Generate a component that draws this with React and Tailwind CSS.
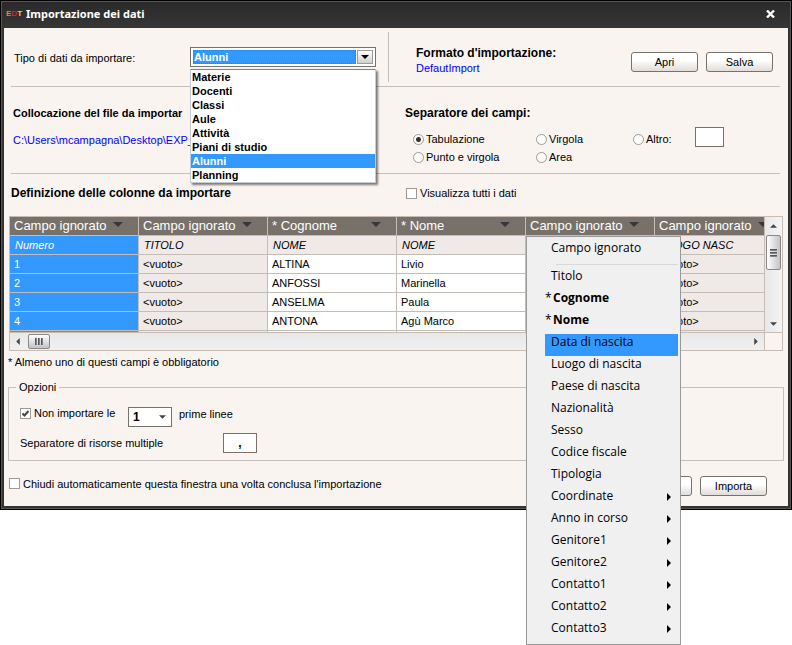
const types = ["Materie", "Docenti", "Classi", "Aule", "Attività", "Piani di studio", "Alunni", "Planning"];

const columns = [
  { title: "Campo ignorato", field: "Numero", values: ["1", "2", "3", "4"], kind: "selected" },
  { title: "Campo ignorato", field: "TITOLO", values: ["<vuoto>", "<vuoto>", "<vuoto>", "<vuoto>"], kind: "ignored" },
  { title: "* Cognome", field: "NOME", values: ["ALTINA", "ANFOSSI", "ANSELMA", "ANTONA"], kind: "used" },
  { title: "* Nome", field: "NOME", values: ["Livio", "Marinella", "Paula", "Agù Marco"], kind: "used" },
  { title: "Campo ignorato", field: "", values: ["", "", "", ""], kind: "ignored" },
  { title: "Campo ignorato", field: "LUOGO NASC", values: ["<vuoto>", "<vuoto>", "<vuoto>", "<vuoto>"], kind: "ignored" },
];

const cellColors = {
  selected: "bg-[#3399ff] text-white",
  ignored: "bg-[#efeae7]",
  used: "bg-white",
};

const menuItems = [
  { label: "Titolo" },
  { label: "Cognome", required: true },
  { label: "Nome", required: true },
  { label: "Data di nascita", active: true },
  { label: "Luogo di nascita" },
  { label: "Paese di nascita" },
  { label: "Nazionalità" },
  { label: "Sesso" },
  { label: "Codice fiscale" },
  { label: "Tipologia" },
  { label: "Coordinate", sub: true },
  { label: "Anno in corso", sub: true },
  { label: "Genitore1", sub: true },
  { label: "Genitore2", sub: true },
  { label: "Contatto1", sub: true },
  { label: "Contatto2", sub: true },
  { label: "Contatto3", sub: true },
];

function Arrow({ dir, className }) {
  const d = {
    down: "M0 0H8L4 4Z",
    up: "M0 4H8L4 0Z",
    left: "M4 0V8L0 4Z",
    right: "M0 0V8L4 4Z",
  }[dir];
  const wide = dir === "down" || dir === "up";
  return (
    <svg aria-hidden="true" className={className} viewBox={wide ? "0 0 8 4" : "0 0 4 8"} fill="currentColor">
      <path d={d} />
    </svg>
  );
}

function PushButton({ children, ...rest }) {
  return (
    <button
      type="button"
      className="h-5 w-[67px] rounded-[3px] border border-[#77716a] bg-linear-to-b from-white from-40% to-[#e0dcd9] text-center leading-[18px]"
      {...rest}
    >
      {children}
    </button>
  );
}

function Radio({ label, checked }) {
  return (
    <label className="flex h-[18px] items-center gap-0.5">
      <input
        type="radio"
        name="separator"
        defaultChecked={checked}
        className="size-[11px] shrink-0 appearance-none rounded-full border border-[#a09a96] bg-white checked:bg-[radial-gradient(circle,#333_0_2px,#fff_3px)]"
      />
      {label}
    </label>
  );
}

function Check({ label, checked }) {
  return (
    <label className="flex items-center gap-[3px]">
      <span className="relative flex size-[11px] shrink-0">
        <input
          type="checkbox"
          defaultChecked={checked}
          className="size-[11px] appearance-none border border-[#a09a96] bg-white"
        />
        {checked && (
          <svg aria-hidden="true" viewBox="0 0 11 11" className="pointer-events-none absolute inset-0" fill="none" stroke="#444" strokeWidth="2">
            <path d="M2.5 5.5L4.5 7.5L8.5 3" />
          </svg>
        )}
      </span>
      {label}
    </label>
  );
}

function TitleBar() {
  return (
    <header className="flex h-[26px] items-center bg-linear-to-b from-[#2a2a2a] to-[#363636] pr-[15px] pb-0.5 pl-1">
      <span aria-hidden="true" className="w-4 text-[8px] leading-[10px] font-bold">
        <span className="text-[#f08020]">E</span>
        <span className="text-[#d42418]">D</span>
        <span className="text-[#f6d21c]">T</span>
      </span>
      <h1 className="flex-1 pl-1 font-['Noto_Sans','Open_Sans',sans-serif] text-[11px] font-bold text-white">
        Importazione dei dati
      </h1>
      <button type="button" aria-label="Chiudi" className="text-white">
        <svg aria-hidden="true" viewBox="0 0 9 8" className="h-2 w-[9px]" stroke="currentColor" strokeWidth="2.400">
          <path d="M1 0.500L8 7.500M8 0.500L1 7.500" />
        </svg>
      </button>
    </header>
  );
}

function TypePicker() {
  return (
    <div className="relative w-[186px]">
      <div className="flex h-5 border border-[#77716a] bg-white p-0.5">
        <select
          id="type"
          defaultValue="Alunni"
          className="h-[14px] min-w-0 flex-1 appearance-none border border-dotted border-[#c06000] bg-[#3399ff] text-[11px] leading-3 font-bold text-white"
        >
          {types.map((t) => (
            <option key={t}>{t}</option>
          ))}
        </select>
        <span className="ml-px flex w-4 items-center justify-center border border-[#a09a96] bg-linear-to-b from-white to-[#d0d0d0]">
          <Arrow dir="down" className="h-1 w-2" />
        </span>
      </div>
      <ul className="absolute top-[22px] left-0 z-10 w-full border border-[#c4ccd8] border-t-[#808080] bg-white font-bold shadow-[2px_2px_2px_rgba(0,0,0,0.5)]">
        {types.map((t) => (
          <li key={t} className={t === "Alunni" ? "h-[14px] bg-[#3399ff] pl-px leading-[14px] text-white" : "h-[14px] pl-px leading-[14px]"}>
            {t}
          </li>
        ))}
      </ul>
    </div>
  );
}

function FieldMenu() {
  return (
    <div
      role="menu"
      className="absolute top-5 left-[517px] z-10 w-[155px] border border-[#999] bg-[#f0f0f0] pr-0.5 pb-0.5 pl-[18px] font-['Open_Sans','Noto_Sans',sans-serif] text-[12px]"
    >
      <button type="button" role="menuitem" className="block h-[22px] w-full pl-1.5 text-left leading-5">
        Campo ignorato
      </button>
      <hr className="mt-[5px] mb-[3px] ml-[11px] border-[#d8d8d8]" />
      {menuItems.map(({ label, required, active, sub }) => (
        <button
          key={label}
          type="button"
          role="menuitem"
          className={active ? "flex h-[22px] w-full items-start bg-[#3399ff] leading-4" : "flex h-[22px] w-full items-start leading-4"}
        >
          <span className={required ? "w-2 shrink-0 text-left" : "w-1.5 shrink-0"}>{required ? "*" : ""}</span>
          <span className={required ? "flex-1 text-left font-bold" : "flex-1 text-left"}>{label}</span>
          {sub && <Arrow dir="right" className="mt-[5px] mr-[7px] h-2 w-1" />}
        </button>
      ))}
    </div>
  );
}

function DataGrid() {
  return (
    <div className="relative mr-[5px] ml-[5px]">
      <div className="flex border border-[#c4bcb5]">
        <div className="h-[115px] min-w-0 flex-1 overflow-hidden">
          <table className="w-[774px] table-fixed border-separate border-spacing-0 text-left">
            <thead>
              <tr>
                {columns.map((c, i) => (
                  <th key={i} className="h-[19px] border-r border-b border-[#c4bcb5] bg-[#77716a] p-0 text-[13px] leading-[18px] font-normal text-white">
                    <span className="flex h-[18px] items-center justify-between pr-[15px] pl-1">
                      {c.title}
                      <Arrow dir="down" className="mb-1 h-[5px] w-2.5 text-[#33383c]" />
                    </span>
                  </th>
                ))}
              </tr>
            </thead>
            <tbody>
              <tr>
                {columns.map((c, i) => (
                  <td
                    key={i}
                    className={`h-[19px] border-r border-b border-[#c4bcb5] p-0 pl-[5px] leading-[18px] italic ${c.kind === "selected" ? cellColors.selected : cellColors.ignored}`}
                  >
                    {c.field}
                  </td>
                ))}
              </tr>
              {[0, 1, 2, 3, 4].map((r) => (
                <tr key={r}>
                  {columns.map((c, i) => (
                    <td key={i} className={`h-[19px] border-r border-b border-[#c4bcb5] p-0 pl-1 leading-[18px] ${cellColors[c.kind]}`}>
                      {c.values[r]}
                    </td>
                  ))}
                </tr>
              ))}
            </tbody>
          </table>
        </div>
        <div className="flex w-[18px] flex-col items-center justify-between border-l border-[#c4bcb5] bg-linear-to-r from-[#e8e8e8] to-[#f4f4f4] pb-1.5">
          <div className="flex flex-col items-center">
            <span className="flex h-[18px] items-center text-[#444]">
              <Arrow dir="up" className="h-1 w-[7px]" />
            </span>
            <span className="flex h-[35px] w-[15px] flex-col items-center justify-center gap-px rounded-[2px] border border-[#888] bg-linear-to-r from-white to-[#c4c4c8]">
              <i className="h-0.5 w-[7px] bg-linear-to-b from-[#444] to-[#999]" />
              <i className="h-0.5 w-[7px] bg-linear-to-b from-[#444] to-[#999]" />
              <i className="h-0.5 w-[7px] bg-linear-to-b from-[#444] to-[#999]" />
            </span>
          </div>
          <Arrow dir="down" className="h-1 w-[7px] text-[#444]" />
        </div>
      </div>
      <div className="flex h-[18px] border-x border-b border-[#c4bcb5]">
        <div className="flex flex-1 items-center bg-linear-to-b from-[#e8e8e8] to-[#f0f0f0] px-1.5 text-[#444]">
          <Arrow dir="left" className="h-[7px] w-1" />
          <span className="ml-2 flex h-[15px] w-[22px] items-center justify-center gap-px rounded-[2px] border border-[#888] bg-linear-to-b from-white to-[#c4c4c8]">
            <i className="h-[7px] w-0.5 bg-linear-to-r from-[#444] to-[#999]" />
            <i className="h-[7px] w-0.5 bg-linear-to-r from-[#444] to-[#999]" />
            <i className="h-[7px] w-0.5 bg-linear-to-r from-[#444] to-[#999]" />
          </span>
          <Arrow dir="right" className="ml-auto h-[7px] w-1" />
        </div>
        <div className="w-[18px] border-l border-[#c4bcb5]" />
      </div>
      <FieldMenu />
    </div>
  );
}

export default function App() {
  return (
    <div className="bg-white pb-[135px] font-['Liberation_Sans',Arial,sans-serif] text-[11px] leading-[14px] text-black">
      <div className="border border-black bg-[#363330]">
        <div className="border border-[#555]">
          <TitleBar />
          <main className="mx-0.5 mb-0.5 bg-[#f9f4f0]">
            <section className="mr-2 ml-[7px] flex h-[59px] border-b border-[#c4c0bc] pt-1">
              <label htmlFor="type" className="w-[179px] pt-[19px] pl-[3px]">
                Tipo di dati da importare:
              </label>
              <div className="pt-[15px]">
                <TypePicker />
              </div>
              <div className="ml-3 flex h-[50px] flex-1 border-l border-[#c4c0bc] pl-[27px]">
                <div className="flex-1 pt-3.5">
                  <h2 className="text-[12px] leading-[15px] font-bold">Formato d'importazione:</h2>
                  <a href="#format" className="block text-[#0000ff]">DefautImport</a>
                </div>
                <div className="flex gap-2 pt-5 pr-[7px]">
                  <PushButton>Apri</PushButton>
                  <PushButton>Salva</PushButton>
                </div>
              </div>
            </section>
            <section className="mr-2 ml-[7px] flex h-[87px] border-b border-[#c4c0bc] pt-[19px]">
              <div className="mr-[215px] w-[179px] pl-0.5 whitespace-nowrap">
                <h2 className="leading-[15px] font-bold">Collocazione del file da importar</h2>
                <a href="#file" className="mt-3 block text-[#0000ff]">C:\Users\mcampagna\Desktop\EXP_</a>
              </div>
              <fieldset className="flex-1">
                <legend className="text-[12px] leading-[15px] font-bold">Separatore dei campi:</legend>
                <div className="flex pt-[9px] pl-2">
                  <div className="w-[123px]">
                    <Radio label="Tabulazione" checked />
                    <Radio label="Punto e virgola" />
                  </div>
                  <div className="w-[97px]">
                    <Radio label="Virgola" />
                    <Radio label="Area" />
                  </div>
                  <div className="w-[62px]">
                    <Radio label="Altro:" />
                  </div>
                  <input aria-label="Altro" className="-mt-[3px] h-5 w-[29px] border border-[#77716a] bg-white text-center" />
                </div>
              </fieldset>
            </section>
            <section className="flex h-[42px] items-start pt-3 pl-[7px]">
              <h2 className="w-[395px] text-[12px] leading-[15px] font-bold">Definizione delle colonne da importare</h2>
              <Check label="Visualizza tutti i dati" />
            </section>
            <DataGrid />
            <p className="pt-1 pl-1">* Almeno uno di questi campi è obbligatorio</p>
            <fieldset className="mt-[11px] mr-1 ml-1 h-[81px] border border-[#c4c0bc] px-[11px]">
              <legend className="-ml-1 px-[3px]">Opzioni</legend>
              <div className="flex h-[39px] items-start pt-3">
                <div className="w-[108px]">
                  <Check label="Non importare le" checked />
                </div>
                <div className="relative pt-px">
                  <select aria-label="Numero di linee" className="block h-5 w-11 appearance-none border border-[#77716a] bg-white pl-1 text-[12px] font-bold">
                    <option>1</option>
                  </select>
                  <Arrow dir="down" className="pointer-events-none absolute top-[9px] right-1.5 h-1 w-[7px] text-[#444]" />
                </div>
                <span className="pt-px pl-[7px]">prime linee</span>
              </div>
              <div className="flex items-center">
                <label htmlFor="multi" className="w-[203px]">Separatore di risorse multiple</label>
                <input id="multi" defaultValue="," className="h-5 w-[34px] border border-[#77716a] bg-white text-center text-[12px] font-bold" />
              </div>
            </fieldset>
            <footer className="flex h-[45px] items-center justify-between pr-[21px] pl-[5px]">
              <Check label="Chiudi automaticamente questa finestra una volta conclusa l'importazione" />
              <div className="flex gap-2 pt-1">
                <PushButton aria-label="Annulla" />
                <PushButton>Importa</PushButton>
              </div>
            </footer>
          </main>
        </div>
      </div>
    </div>
  );
}
